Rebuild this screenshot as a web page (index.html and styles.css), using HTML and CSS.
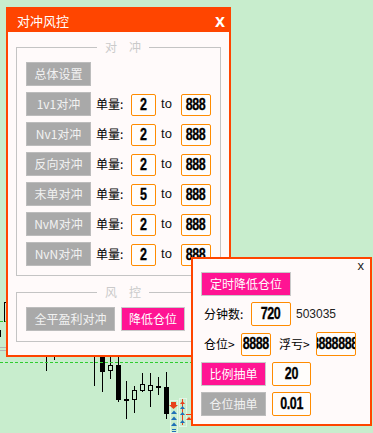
FILE: index.html
```html
<!DOCTYPE html>
<html>
<head>
  <meta charset="utf-8">
  <title>对冲风控</title>
  <link rel="stylesheet" href="styles.css">
</head>
<body>
<div class="desk">

  <!-- chart behind the panels -->
  <svg class="chart" width="373" height="433" viewBox="0 0 373 433">
    <g stroke="#000" stroke-width="1" fill="none">
      <line x1="4.5" y1="302" x2="4.5" y2="322"/>
      <line x1="4" y1="302.5" x2="6" y2="302.5"/>
      <line x1="0.5" y1="330" x2="0.5" y2="337"/>
      <line x1="46.5" y1="357" x2="46.5" y2="371"/>
      <line x1="54.5" y1="357" x2="54.5" y2="360"/>
      <line x1="94.5" y1="357" x2="94.5" y2="386"/>
      <line x1="102.5" y1="357" x2="102.5" y2="392"/>
      <line x1="110.5" y1="357" x2="110.5" y2="379"/>
      <line x1="118.5" y1="357" x2="118.5" y2="402"/>
      <line x1="126.5" y1="381" x2="126.5" y2="419"/>
      <line x1="134.5" y1="386" x2="134.5" y2="413"/>
      <line x1="142.5" y1="373" x2="142.5" y2="392"/>
      <line x1="150.5" y1="373" x2="150.5" y2="407"/>
      <line x1="158.5" y1="377" x2="158.5" y2="395"/>
      <line x1="166.5" y1="372" x2="166.5" y2="419"/>
    </g>
    <g fill="#000">
      <rect x="100" y="357" width="5" height="15"/>
      <rect x="116" y="365" width="5" height="35"/>
      <rect x="124" y="399" width="5" height="2"/>
      <rect x="156" y="386" width="5" height="2"/>
      <rect x="164" y="387" width="5" height="27"/>
    </g>
    <g fill="#c8edcd" stroke="#000">
      <rect x="108.5" y="365.5" width="4" height="5"/>
      <rect x="132.5" y="390.5" width="4" height="9"/>
      <rect x="140.5" y="384.5" width="4" height="6"/>
      <rect x="148.5" y="385.5" width="4" height="5"/>
    </g>
    <g stroke="#b4b4b4">
      <line x1="0" y1="347.5" x2="6" y2="347.5"/>
      <line x1="0" y1="350.5" x2="6" y2="350.5"/>
    </g>
    <g stroke="#2fcc2f" stroke-dasharray="3 2">
      <line x1="0" y1="321.5" x2="6" y2="321.5"/>
      <line x1="0" y1="362.5" x2="192" y2="362.5"/>
    </g>
    <!-- trade arrows -->
    <g stroke="#fff" stroke-dasharray="1 1" fill="none">
      <rect x="170.5" y="400.5" width="7" height="32"/>
      <rect x="179.5" y="398.5" width="7" height="28"/>
    </g>
    <g stroke="#e8401c" stroke-width="1">
      <line x1="182.5" y1="399" x2="182.5" y2="425"/>
      <line x1="186" y1="414.5" x2="191" y2="414.5"/>
    </g>
    <g fill="#e8401c">
      <path d="M171 402h5v3h2l-4.5 4l-4.5-4h2z"/>
      <path d="M180 404l2.5-3l2.5 3z"/>
      <path d="M186 420l3-3l3 3z"/>
    </g>
    <g fill="#1e6fb8">
      <path d="M171 414l3-3.5l3 3.5z"/>
      <path d="M171 420l3-3.5l3 3.5z"/>
      <path d="M171 426l3-3.5l3 3.5z"/>
      <path d="M180 409l2.5-3l2.5 3z"/>
      <path d="M180 415l2.5-3l2.5 3z"/>
      <path d="M180 423l2.5-3l2.5 3z"/>
      <rect x="172" y="429" width="4" height="1"/>
      <rect x="172" y="431" width="4" height="1"/>
    </g>
  </svg>

  <section class="win main">
    <header class="win-title">
      <span>对冲风控</span>
      <span class="win-x">x</span>
    </header>
    <div class="win-body">
      <fieldset class="group">
        <legend>对　冲</legend>
        <div class="row"><button class="btn">总体设置</button></div>
        <div class="row">
          <button class="btn">1v1对冲</button>
          <span class="lbl">单量:</span><span class="val v-min"><b>2</b></span><span class="to">to</span><span class="val v-max"><b>888</b></span>
        </div>
        <div class="row">
          <button class="btn">Nv1对冲</button>
          <span class="lbl">单量:</span><span class="val v-min"><b>2</b></span><span class="to">to</span><span class="val v-max"><b>888</b></span>
        </div>
        <div class="row">
          <button class="btn">反向对冲</button>
          <span class="lbl">单量:</span><span class="val v-min"><b>2</b></span><span class="to">to</span><span class="val v-max"><b>888</b></span>
        </div>
        <div class="row">
          <button class="btn">末单对冲</button>
          <span class="lbl">单量:</span><span class="val v-min"><b>5</b></span><span class="to">to</span><span class="val v-max"><b>888</b></span>
        </div>
        <div class="row">
          <button class="btn">NvM对冲</button>
          <span class="lbl">单量:</span><span class="val v-min"><b>2</b></span><span class="to">to</span><span class="val v-max"><b>888</b></span>
        </div>
        <div class="row">
          <button class="btn">NvN对冲</button>
          <span class="lbl">单量:</span><span class="val v-min"><b>2</b></span><span class="to">to</span><span class="val v-max"><b>888</b></span>
        </div>
      </fieldset>

      <fieldset class="group risk">
        <legend>风　控</legend>
        <div class="row">
          <button class="btn btn-wide">全平盈利对冲</button>
          <button class="btn btn-pink btn-cut">降低仓位</button>
        </div>
      </fieldset>
    </div>
  </section>

  <section class="win pop">
    <span class="pop-x">x</span>
    <div class="prow"><button class="btn btn-pink btn-timer">定时降低仓位</button></div>
    <div class="prow">
      <span class="plbl w-min">分钟数:</span>
      <span class="val pval w40 m6"><b>720</b></span>
      <span class="plain">503035</span>
    </div>
    <div class="prow">
      <span class="plbl w-pos">仓位&gt;</span>
      <span class="val pval w30 m6"><b>8888</b></span>
      <span class="plbl w-loss">浮亏&gt;</span>
      <span class="val pval w40 m5 clip"><b>8888888</b></span>
    </div>
    <div class="prow">
      <button class="btn btn-pink">比例抽单</button>
      <span class="val pval w39 m6"><b>20</b></span>
    </div>
    <div class="prow">
      <button class="btn">仓位抽单</button>
      <span class="val pval w39 m6"><b>0.01</b></span>
    </div>
  </section>

</div>
</body>
</html>
```

FILE: styles.css
```css
body { margin: 0; }

.desk {
    position: relative;
    width: 373px;
    height: 433px;
    overflow: hidden;
    background: #c8edcd;
    font-family: "Noto Sans CJK SC", sans-serif;
    color: #000;
}
.chart { position: absolute; left: 0; top: 0; }

/* windows */
.win {
    position: absolute;
    box-sizing: border-box;
    border: 2px solid #ff4500;
    background: #fffafa;
}
.main {
    left: 6px; top: 7px;
    width: 225px; height: 350px;
    display: flex;
    flex-direction: column;
}
.win-title {
    height: 23px;
    background: #ff4500;
    color: #fff;
    display: flex;
    align-items: center;
    justify-content: space-between;
    padding: 0 4px 0 9px;
    font-size: 13px;
    line-height: 16px;
}
.win-x { font: bold 18px/16px "Liberation Sans", sans-serif; }

/* groups */
.group {
    margin: 8px 8px 0;
    padding: 8px 0 9px 9px;
    border: 1px solid #c4c4c4;
    display: flex;
    flex-direction: column;
    gap: 6px;
    min-width: 0;
}
.group.risk { margin-top: 9px; padding-bottom: 10px; }
.group legend {
    margin: 0 auto;
    padding: 0 8px;
    font-size: 12px;
    line-height: 14px;
    color: #cacaca;
}

.row { display: flex; align-items: flex-end; height: 24px; }

.btn {
    box-sizing: border-box;
    width: 65px; height: 24px;
    padding: 0;
    border: 1px solid #bcbcbc;
    background: #a9a9a9;
    color: #f2f2f2;
    font: 12px/22px "Noto Sans CJK SC", sans-serif;
    white-space: nowrap;
}
.btn-wide { width: 89px; }
.btn-pink { background: #ff1493; color: #fff; border-color: #c9c9c9; }
.btn-cut { width: 64px; margin-left: 6px; }
.btn-timer { width: 90px; }

.lbl {
    align-self: center;
    width: 28px;
    margin-left: 5px;
    font-size: 12px;
    line-height: 14px;
    white-space: nowrap;
}
.to {
    align-self: center;
    width: 21px;
    text-align: center;
    font: 13px/14px "Liberation Sans", sans-serif;
    color: #111;
}

.val {
    box-sizing: border-box;
    height: 22px;
    display: flex;
    align-items: center;
    justify-content: center;
    border: 1px solid #ff8c00;
    border-radius: 2px;
    background: #fffdfb;
    overflow: hidden;
    white-space: nowrap;
}
/* digits are a narrow heavy face: squeeze a bold sans */
.val b {
    display: inline-block;
    flex: none;
    font: bold 16px/16px "Liberation Sans", sans-serif;
    letter-spacing: -0.5px;
    transform: scaleX(0.78);
    -webkit-text-stroke: 0.3px #000;
}
.v-min { width: 25px; margin-left: 7px; }
.v-max { width: 30px; margin-left: 4px; }

/* popup */
.pop {
    left: 191px; top: 257px;
    width: 181px; height: 169px;
    padding: 13px 0 0 8px;
    display: flex;
    flex-direction: column;
    gap: 6px;
}
.pop-x {
    position: absolute;
    right: 6px; top: 0;
    font: 13px/14px "Liberation Sans", sans-serif;
    color: #222;
}
.prow { display: flex; align-items: center; height: 24px; }
.pval { height: 24px; }
.pval.w30 { height: 23px; }
.plbl {
    margin-left: 3px;
    font-size: 12px;
    line-height: 14px;
    white-space: nowrap;
}
.w-min { width: 41px; }
.w-pos { width: 31px; }
.w-loss { width: 32px; margin-left: 8px; }
.w30 { width: 30px; }
.w39 { width: 39px; }
.w40 { width: 40px; }
.m5 { margin-left: 5px; }
.m6 { margin-left: 6px; }
.clip { justify-content: flex-end; }
.clip b { transform-origin: right center; margin-right: -3px; }
.plain {
    margin-left: 5px;
    font: 12px/14px "Liberation Sans", sans-serif;
    color: #222;
}
```
